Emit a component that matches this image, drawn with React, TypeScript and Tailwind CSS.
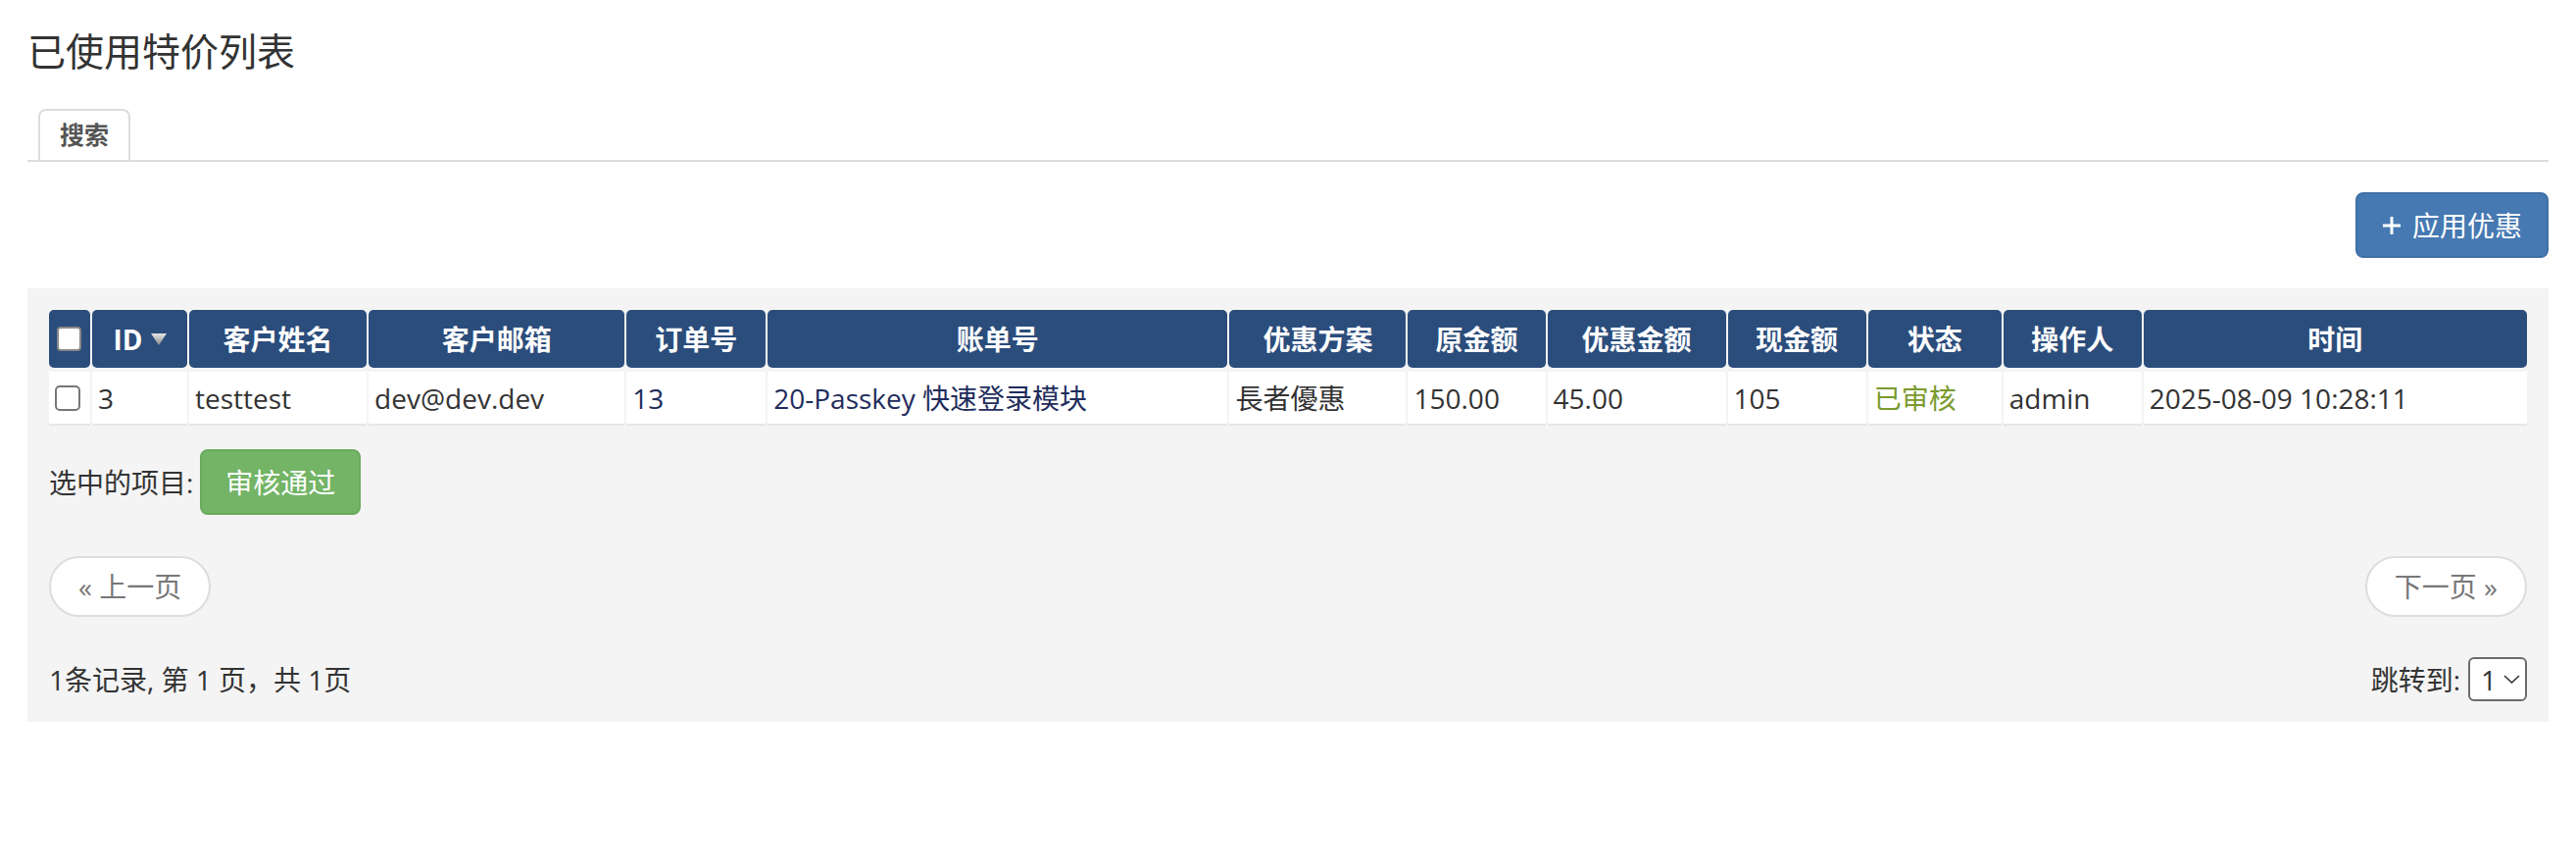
import { useState } from "react";

type Row = {
  id: number;
  name: string;
  email: string;
  order: string;
  invoice: string;
  plan: string;
  original: string;
  discount: string;
  current: string;
  status: string;
  operator: string;
  time: string;
};

const rows: Row[] = [
  {
    id: 3,
    name: "testtest",
    email: "dev@dev.dev",
    order: "13",
    invoice: "20-Passkey 快速登录模块",
    plan: "長者優惠",
    original: "150.00",
    discount: "45.00",
    current: "105",
    status: "已审核",
    operator: "admin",
    time: "2025-08-09 10:28:11",
  },
];

const font = { fontFamily: '"Open Sans", "Noto Sans CJK SC", sans-serif' };

function Box({ header }: { header?: boolean }) {
  return (
    <span
      className={
        header
          ? "block w-[25px] h-[25px] rounded-[4px] bg-white border-2 border-[#888]"
          : "block w-[26px] h-[26px] rounded-[5px] bg-white border-2 border-[#777]"
      }
    />
  );
}

function PlusIcon() {
  return (
    <svg width="20" height="20" viewBox="0 0 20 20" fill="none">
      <path d="M10 1v18M1 10h18" stroke="white" strokeWidth="3" />
    </svg>
  );
}

export default function App() {
  const [page, setPage] = useState("1");

  return (
    <div className="min-h-screen bg-white px-[28px] pt-[26px] text-[#333]" style={font}>
      {/* Title */}
      <h1 className="text-[39px] leading-[52px] font-normal text-[#333]">已使用特价列表</h1>

      {/* Tabs */}
      <div className="mt-[33px] flex border-b-2 border-[#dddddd] pl-[11px]">
        <div className="h-[52px] px-[20px] flex items-center border-2 border-b-0 border-[#dddddd] rounded-t-[8px] bg-white text-[25px] font-bold text-[#555]">
          搜索
        </div>
      </div>

      {/* Toolbar */}
      <div className="mt-[31px] flex justify-end">
        <button className="h-[67px] px-[25px] flex items-center gap-[11px] rounded-[8px] bg-[#4679b2] border-2 border-[#3f6fa6] text-white text-[28px]">
          <PlusIcon />
          <span>应用优惠</span>
        </button>
      </div>

      {/* Panel */}
      <div className="mt-[31px] bg-[#f4f4f4] p-[22px] pb-[21px]">
        <div className="-mx-[2px]">
          <table className="w-[2532px] table-fixed border-separate border-spacing-x-[2px] border-spacing-y-0 text-[28px]">
            <thead>
              <tr className="text-white font-bold">
                <th className="w-[42px] h-[59px] rounded-[5px] bg-[#2b4d7c] px-[8px]">
                  <Box header />
                </th>
                <th className="w-[97px] rounded-[5px] bg-[#2b4d7c]">
                  <span className="inline-flex items-center gap-[8px]">
                    ID
                    <svg width="16" height="12" viewBox="0 0 16 12">
                      <defs>
                        <linearGradient id="tri" x1="0" y1="0" x2="0" y2="1">
                          <stop offset="0" stopColor="#e6e6e6" />
                          <stop offset="1" stopColor="#8a8a8a" />
                        </linearGradient>
                      </defs>
                      <path d="M0 0h16L8 12z" fill="url(#tri)" />
                    </svg>
                  </span>
                </th>
                <th className="w-[181px] rounded-[5px] bg-[#2b4d7c]">客户姓名</th>
                <th className="w-[261px] rounded-[5px] bg-[#2b4d7c]">客户邮箱</th>
                <th className="w-[142px] rounded-[5px] bg-[#2b4d7c]">订单号</th>
                <th className="w-[469px] rounded-[5px] bg-[#2b4d7c]">账单号</th>
                <th className="w-[180px] rounded-[5px] bg-[#2b4d7c]">优惠方案</th>
                <th className="w-[140px] rounded-[5px] bg-[#2b4d7c]">原金额</th>
                <th className="w-[182px] rounded-[5px] bg-[#2b4d7c]">优惠金额</th>
                <th className="w-[141px] rounded-[5px] bg-[#2b4d7c]">现金额</th>
                <th className="w-[136px] rounded-[5px] bg-[#2b4d7c]">状态</th>
                <th className="w-[141px] rounded-[5px] bg-[#2b4d7c]">操作人</th>
                <th className="w-[391px] rounded-[5px] bg-[#2b4d7c]">时间</th>
              </tr>
            </thead>
            <tbody>
              <tr>
                <td colSpan={13} className="h-[4px] p-0" />
              </tr>
              {rows.map((r) => (
                <tr key={r.id} className="[&>td]:bg-white [&>td]:border-b-2 [&>td]:border-[#e6e6e6] [&>td]:h-[55px] [&>td]:px-[6px] [&>td]:whitespace-nowrap">
                  <td>
                    <Box />
                  </td>
                  <td>{r.id}</td>
                  <td>{r.name}</td>
                  <td>{r.email}</td>
                  <td>
                    <a className="text-[#1f2d5c]">{r.order}</a>
                  </td>
                  <td>
                    <a className="text-[#1f2d5c]">{r.invoice}</a>
                  </td>
                  <td>{r.plan}</td>
                  <td>{r.original}</td>
                  <td>{r.discount}</td>
                  <td>{r.current}</td>
                  <td className="text-[#7a9a2e]">{r.status}</td>
                  <td>{r.operator}</td>
                  <td>{r.time}</td>
                </tr>
              ))}
            </tbody>
          </table>
        </div>

        {/* Bulk actions */}
        <div className="mt-[24px] flex items-center gap-[7px] text-[28px]">
          <span>选中的项目:</span>
          <button className="h-[67px] px-[24px] rounded-[8px] bg-[#73b466] border-2 border-[#6aab5d] text-white text-[28px]">
            审核通过
          </button>
        </div>

        {/* Pager */}
        <div className="mt-[42px] flex justify-between">
          <button className="h-[62px] px-[28px] rounded-full bg-white border-2 border-[#dddddd] text-[#777] text-[28px]">
            « 上一页
          </button>
          <button className="h-[62px] px-[28px] rounded-full bg-white border-2 border-[#dddddd] text-[#777] text-[28px]">
            下一页 »
          </button>
        </div>

        {/* Footer */}
        <div className="mt-[41px] flex items-center justify-between text-[28px]">
          <span>1条记录, 第 1 页，共 1页</span>
          <label className="flex items-center gap-[8px]">
            <span>跳转到:</span>
            <span className="relative">
              <select
                value={page}
                onChange={(e) => setPage(e.target.value)}
                className="appearance-none h-[45px] w-[60px] pl-[11px] pr-[24px] rounded-[6px] border-2 border-[#6b6b6b] bg-white text-[28px] leading-none text-[#333]"
                style={font}
              >
                <option value="1">1</option>
              </select>
              <svg
                className="pointer-events-none absolute right-[7px] top-[18px]"
                width="17"
                height="9"
                viewBox="0 0 17 9"
                fill="none"
              >
                <path d="M1 1l7.5 7L16 1" stroke="#333" strokeWidth="1.6" />
              </svg>
            </span>
          </label>
        </div>
      </div>
    </div>
  );
}
